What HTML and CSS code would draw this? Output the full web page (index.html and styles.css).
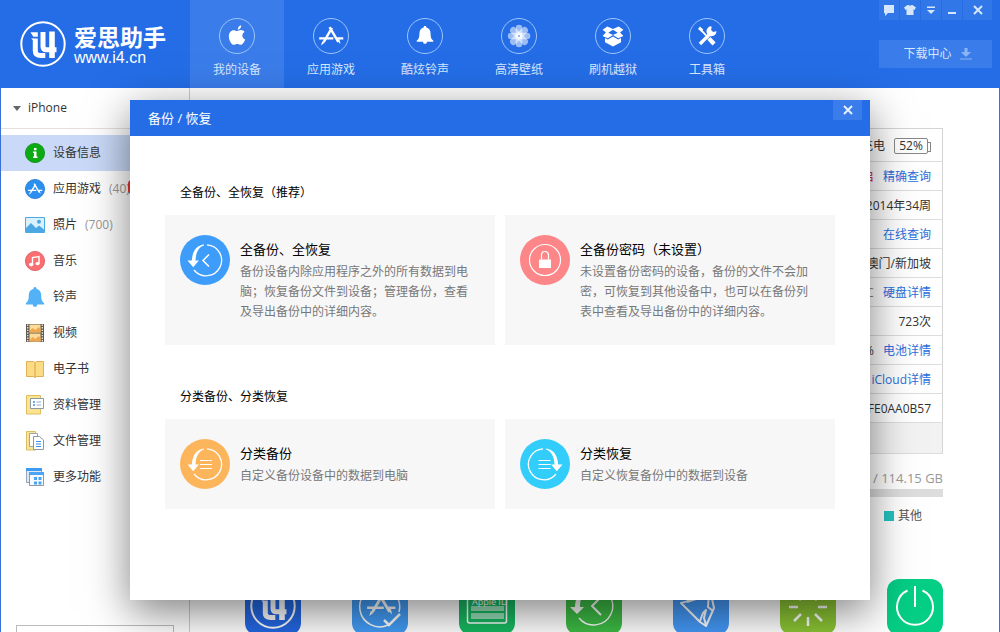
FILE: index.html
```html
<!DOCTYPE html>
<html lang="zh-CN">
<head>
<meta charset="utf-8">
<title>爱思助手</title>
<link rel="stylesheet" href="styles.css">
</head>
<body>
<svg class="defs" aria-hidden="true">
  <symbol id="mark" viewBox="0 0 46 46">
    <circle cx="23" cy="23" r="21.7" fill="none" stroke="currentColor" stroke-width="2"/>
    <g fill="none" stroke="currentColor" stroke-width="5"><path d="M15.300 17.500v12.500q0 4.500 5.500 4.500h4.500"/><path d="M23 11v14.500q0 3.300 3.500 3.300h10"/><path d="M32 10.500v26.500" stroke-width="5.600"/></g>
    <path d="M10.500 11.200h7.300v4.600h-4.500zM11 17.500h3v2.500z" fill="currentColor"/>
  </symbol>
  <symbol id="store" viewBox="0 0 36 36">
    <g fill="none" stroke="currentColor" stroke-width="2.600"><path d="M16.500 8.500l9.200 15.700M19 9.500l-8.600 14.700"/><path d="M5.500 20.500h15M24.500 20.500h6.500" stroke-width="2.200"/></g>
    <path d="M24 22.500l2.800-1.600 1.200 5.600zM8.800 23.500l2.600 1.500-4 3z" fill="currentColor"/>
  </symbol>
  <symbol id="bell" viewBox="0 0 20 20">
    <path d="M10 0c1.200 0 1.600.8 1.500 1.700 3 .8 4.700 3.300 4.700 6.300 0 4.500.8 6.600 3 8.200v1.200h-7c0 1.500-.8 2.400-2.200 2.400s-2.200-.9-2.200-2.400h-7v-1.200c2.200-1.600 3-3.700 3-8.200 0-3 1.700-5.500 4.700-6.300C8.400.8 8.800 0 10 0z" fill="currentColor"/>
  </symbol>
  <symbol id="restore" viewBox="0 0 40 40">
    <path d="M22 4.800A15.500 15.500 0 1 1 9 30" fill="none" stroke="currentColor" stroke-width="1.300"/>
    <path d="M19 4.500C13 5 7.500 9.500 6.800 20.500H2.500l5.700 6.800 5.700-6.800H10.500C10.800 12 14 7 19 5.500z" fill="currentColor"/>
  </symbol>
  <symbol id="close" viewBox="0 0 10 10"><path d="M1 1l8 8M9 1L1 9" stroke="currentColor" stroke-width="2" fill="none"/></symbol>
</svg>

<header class="topbar">
  <a class="brand" href="#home">
    <svg class="brand-mark"><use href="#mark"/></svg>
    <span class="brand-text"><strong>爱思助手</strong><span>www.i4.cn</span></span>
  </a>
  <nav class="nav">
    <a class="nav-item active" href="#device">
      <span class="ring"><svg viewBox="0 0 36 36"><path d="M18.800 11.500c0-2.700 1.600-4.400 3.600-4.800.3 2.500-1.400 4.700-3.600 4.800zM18 12.700c1.200 0 2.400-1 4.200-1 1.600 0 3 .8 3.800 2-3.500 2-2.900 6.700.7 8-.9 2.600-2.800 5.600-4.700 5.600-1.400 0-2-.8-3.700-.8s-2.300.8-3.700.8c-2.600 0-5.200-4.900-5.200-8.900 0-4.200 2.500-6.500 5-6.500 1.600 0 2.600.8 3.600.8z" fill="currentColor"/></svg></span>我的设备</a>
    <a class="nav-item" href="#apps">
      <span class="ring"><svg><use href="#store"/></svg></span>应用游戏</a>
    <a class="nav-item" href="#rings">
      <span class="ring"><svg viewBox="0 0 36 36"><use href="#bell" x="8.500" y="7" width="19" height="20"/></svg></span>酷炫铃声</a>
    <a class="nav-item" href="#wall">
      <span class="ring"><svg viewBox="0 0 36 36"><g fill="currentColor" fill-opacity=".55"><rect id="petal" x="14.500" y="6" width="7" height="13" rx="3.500"/><use href="#petal" transform="rotate(45 18 18)"/><use href="#petal" transform="rotate(90 18 18)"/><use href="#petal" transform="rotate(135 18 18)"/><use href="#petal" transform="rotate(180 18 18)"/><use href="#petal" transform="rotate(225 18 18)"/><use href="#petal" transform="rotate(270 18 18)"/><use href="#petal" transform="rotate(315 18 18)"/></g><circle cx="18" cy="18" r="1" fill="#6b9df0"/></svg></span>高清壁纸</a>
    <a class="nav-item" href="#flash">
      <span class="ring"><svg viewBox="0 0 36 36"><path d="M12 8l6 2.500L24 8l5 3.500-3.500 2.800L29 18l-5.500 2.500L18 17l-5.500 3.500L7 18l3.500-3.700L7 11.500zM18 11.500l-5 3 5 2.500 5-2.500zM9.500 20l3 1.600 5.500-3.100 5.500 3.100 3-1.600v4.500L18 29l-8.500-4.500z" fill="currentColor" fill-rule="evenodd"/></svg></span>刷机越狱</a>
    <a class="nav-item" href="#tools">
      <span class="ring"><svg viewBox="0 0 36 36"><g fill="none" stroke="currentColor"><path d="M10 10l9.500 10" stroke-width="2"/><path d="M20 20.500l5.500 6" stroke-width="4.500"/><path d="M10.500 26.500L22 15" stroke-width="3.600"/></g><path d="M8.500 10.500l2-2.500 3.500 3-2 2.500zM28 13a5.300 5.300 0 1 1-6-5.200l1 .8-.7 3 2.200 2.200 3-.8z" fill="currentColor"/></svg></span>工具箱</a>
  </nav>
  <div class="tools">
    <div class="window-buttons">
      <button type="button" aria-label="反馈"><svg viewBox="0 0 12 12"><path d="M1 1h10v8H5l-3 3V9H1z" fill="currentColor"/></svg></button>
      <button type="button" aria-label="皮肤"><svg viewBox="0 0 12 12"><path d="M3.500 1h1.200q1.300 1.500 2.600 0h1.200L12 3.500 10.500 6 9.500 5.500V11h-7V5.500L1.500 6 0 3.500z" fill="currentColor"/></svg></button>
      <button type="button" aria-label="菜单"><svg viewBox="0 0 12 12"><path d="M2 2.500h8v1.500H2zM2 6h8L6 10z" fill="currentColor"/></svg></button>
      <button type="button" aria-label="最小化"><svg viewBox="0 0 12 12"><path d="M2 8h8v2H2z" fill="currentColor"/></svg></button>
      <button type="button" aria-label="关闭窗口" class="wide"><svg><use href="#close"/></svg></button>
    </div>
    <button type="button" class="download">下载中心
      <svg viewBox="0 0 12 12"><path d="M4.500 0h3v4H11L6 9 1 4h3.500zM0 10.500h12v1H0z" fill="currentColor"/></svg></button>
  </div>
</header>

<div class="body">
  <aside class="sidebar">
    <div class="device"><svg viewBox="0 0 8 5"><path d="M0 0h8L4 5z" fill="#666"/></svg>iPhone</div>
    <ul class="menu">
      <li><a class="current" href="#info"><svg viewBox="0 0 20 20"><circle cx="10" cy="10" r="9.600" fill="#0cab13" stroke="#078c0c" stroke-width=".8"/><path d="M9 5h2.500v2.200H9zM8 8.500h3.500v5h1V15H8v-1.500h1V10H8z" fill="#fff"/></svg>设备信息</a></li>
      <li><a href="#games"><svg viewBox="0 0 20 20" color="#fff"><circle cx="10" cy="10" r="9.600" fill="#2b8ff0" stroke="#2277cf" stroke-width=".8"/><use href="#store" width="20" height="20"/></svg>应用游戏 <span class="count">(40)<i class="dot"></i></span></a></li>
      <li><a href="#photos"><svg viewBox="0 0 20 20"><path d="M.5 2.500h19v15H.5z" fill="#d9f0fd" stroke="#4da9e4"/><path d="M1 13l5-5 5 5 3-2.500 5 4V17H1z" fill="#4ba8e5"/><circle cx="14" cy="6.700" r="2" fill="#4ba8e5"/></svg>照片 <span class="count">(700)</span></a></li>
      <li><a href="#music"><svg viewBox="0 0 20 20"><circle cx="10" cy="10" r="9.600" fill="#fb6f72" stroke="#d95357" stroke-width=".8"/><path d="M7.500 13.500V6.500l6.500-1v7" fill="none" stroke="#fff" stroke-width="1.400"/><ellipse cx="6.200" cy="13.600" rx="2.200" ry="1.800" fill="#fff"/><ellipse cx="12.600" cy="12.600" rx="2.100" ry="1.700" fill="#fff"/></svg>音乐</a></li>
      <li><a href="#tones"><svg color="#53b1f6"><use href="#bell"/></svg>铃声</a></li>
      <li><a href="#video"><svg viewBox="0 0 20 20"><path d="M1 1h18v18H1z" fill="#5f5a52"/><path d="M4.500 1.500h11v8h-11zM4.500 10.500h11v8h-11z" fill="#fbdc9a"/><path d="M4.500 8l3-3 3 2 3-3 2 2v3.500h-11zM4.500 17l3-3 3 2 3-3 2 2v3.500h-11z" fill="#f0a850"/><path d="M2.700 1.500v18M17.300 1.500v18" stroke="#e8e2d4" stroke-width="1.400" stroke-dasharray="1.400 1.200"/></svg>视频</a></li>
      <li><a href="#books"><svg viewBox="0 0 20 20"><path d="M1.500 2.500h7L10 3.500l1.500-1h7v15h-7L10 18.500l-1.500-1h-7z" fill="#fbdc85" stroke="#dfb055"/><path d="M10 3.500v15" stroke="#d9a047"/></svg>电子书</a></li>
      <li><a href="#data"><svg viewBox="0 0 20 20"><path d="M1.500.5h14V19h-14z" fill="#fbe38f" stroke="#dcbf62"/><path d="M5.500 3.500h13v10h-13z" fill="#fff" stroke="#8b98a8"/><path d="M8 7h2M8 10h2" stroke="#3c8ee0" stroke-width="1.500"/><path d="M11.500 7h4.500M11.500 10h4.500" stroke="#8eabc8"/></svg>资料管理</a></li>
      <li><a href="#files"><svg viewBox="0 0 20 20"><path d="M1.500.5h9V19h-9z" fill="#fbe38f" stroke="#dcbf62"/><path d="M4.500 2.500h8v13h-8z" fill="#fff" stroke="#9aa5b2"/><path d="M8.500 5.500h6l4 3.500v9.500h-10z" fill="#fff" stroke="#8b98a8"/><path d="M11 10.500h5M11 13h5M11 15.500h5" stroke="#3c8ee0"/></svg>文件管理</a></li>
      <li><a href="#more"><svg viewBox="0 0 20 20"><path d="M1.500 1.500h15v14h-15z" fill="#dfe8f2" stroke="#94a7bb"/><path d="M1 1h16v3H1z" fill="#3c9af0"/><path d="M4.500 5.500h14v13h-14z" fill="#f7fbff" stroke="#8b98a8"/><path d="M4 5h15v3H4z" fill="#4ba3f3"/><path d="M9 10h3v3H9zM13.500 10h3v3h-3zM9 14.500h3v3H9zM13.500 14.500h3v3h-3z" fill="#4ba3f3"/></svg>更多功能</a></li>
    </ul>
    <div class="side-box"></div>
  </aside>

  <main class="main">
    <table class="info">
      <tr class="power"><td>正在充电 <span class="battery">52%</span></td></tr>
      <tr><td><span class="warn">未开启</span> <a href="#q1">精确查询</a></td></tr>
      <tr><td>2014年34周</td></tr>
      <tr><td><a href="#q2">在线查询</a></td></tr>
      <tr><td>澳门/新加坡</td></tr>
      <tr><td><span class="soft">TLC</span> <a href="#q3">硬盘详情</a></td></tr>
      <tr><td>723次</td></tr>
      <tr><td>% <a href="#q4">电池详情</a></td></tr>
      <tr><td><a href="#q5">iCloud详情</a></td></tr>
      <tr><td>FE0AA0B57</td></tr>
      <tr class="foot"><td></td></tr>
    </table>
    <div class="storage">
      <div class="storage-text">/ 114.15 GB</div>
      <div class="storage-bar"></div>
      <div class="legend"><i></i>其他</div>
    </div>
    <div class="tiles">
      <button type="button" class="tile navy" aria-label="爱思"><svg viewBox="0 0 56 56"><use href="#mark" x="5" y="4" width="46" height="46"/></svg></button>
      <button type="button" class="tile blue" aria-label="应用修复"><svg viewBox="0 0 56 56"><path d="M36 46A20 20 0 1 1 47 33" fill="none" stroke="currentColor" stroke-width="1.500"/><use href="#store" x="9" y="6" width="40" height="40"/><path d="M32 41l5 5 11-11" fill="none" stroke="currentColor" stroke-width="2.500"/></svg></button>
      <button type="button" class="tile green" aria-label="Apple ID"><svg viewBox="0 0 56 56"><rect x="8.500" y="10" width="39" height="34" rx="2" fill="none" stroke="currentColor" stroke-width="1.500"/><path d="M12 27h33v5H12zM12 34h33v6H12z" fill="currentColor" opacity=".55"/><text x="13" y="26" class="tile-label">Apple ID</text></svg></button>
      <button type="button" class="tile leaf" aria-label="备份恢复"><svg viewBox="0 0 56 56"><path d="M28 8a19 19 0 1 1-15 31" fill="none" stroke="currentColor" stroke-width="1.400"/><path d="M24 8C14 11 9 18 9 28H4l7 7 7-7h-4c0-9 3-15 10-20z" fill="currentColor"/><path d="M35 18l-9 9 9 9" fill="none" stroke="currentColor" stroke-width="2"/></svg></button>
      <button type="button" class="tile azure" aria-label="清理垃圾"><svg viewBox="0 0 56 56"><path d="M8 24q12-2 18-12l12 3 3 14-8 18-6-4zM36 14l-1 14 5 4M27 42l3-8 3-3-2 8 2 7M14 23l12-4" fill="none" stroke="currentColor" stroke-width="2" stroke-linejoin="round"/></svg></button>
      <button type="button" class="tile lime" aria-label="加载"><svg viewBox="0 0 56 56"><path d="M9 28h9M38 28h9M28 38v9M21 35l-7 7M35 35l7 7M28 18V9M21 21l-7-7M35 21l7-7" fill="none" stroke="currentColor" stroke-width="2.500"/></svg></button>
      <button type="button" class="tile mint" aria-label="关机"><svg viewBox="0 0 56 56"><path d="M20.500 11.500a18 18 0 1 0 15 0M28 7v21" fill="none" stroke="currentColor" stroke-width="2"/></svg></button>
    </div>
  </main>
</div>

<section class="dialog" role="dialog" aria-labelledby="dialog-title">
  <header class="dialog-head">
    <h1 id="dialog-title">备份 / 恢复</h1>
    <button type="button" class="dialog-close" aria-label="关闭"><svg><use href="#close"/></svg></button>
  </header>
  <div class="dialog-body">
    <h2>全备份、全恢复（推荐）</h2>
    <div class="cards">
      <a class="card" href="#full">
        <span class="badge b-blue"><svg viewBox="0 0 50 50"><use href="#restore" x="5" y="5" width="40" height="40"/><path d="M29 19.500l-6 6 6 6" fill="none" stroke="currentColor" stroke-width="1.500"/></svg></span>
        <span class="card-text"><strong>全备份、全恢复</strong><span>备份设备内除应用程序之外的所有数据到电脑；恢复备份文件到设备；管理备份，查看及导出备份中的详细内容。</span></span>
      </a>
      <a class="card" href="#password">
        <span class="badge b-red"><svg viewBox="0 0 50 50"><circle cx="25" cy="25" r="15.500" fill="none" stroke="currentColor" stroke-width="1.200"/><path d="M19 24.500h12V33H19z" fill="currentColor"/><path d="M21.500 24.500V20a3.500 3.500 0 0 1 7 0v4.500" fill="none" stroke="currentColor" stroke-width="1.200"/></svg></span>
        <span class="card-text"><strong>全备份密码（未设置）</strong><span>未设置备份密码的设备，备份的文件不会加密，可恢复到其他设备中，也可以在备份列表中查看及导出备份中的详细内容。</span></span>
      </a>
    </div>
    <h2>分类备份、分类恢复</h2>
    <div class="cards">
      <a class="card" href="#part-backup">
        <span class="badge b-orange"><svg viewBox="0 0 50 50"><use href="#restore" x="5" y="5" width="40" height="40"/><path d="M20 21.500h12M20 25.500h12M20 29.500h12" stroke="currentColor" stroke-width="1.200"/></svg></span>
        <span class="card-text"><strong>分类备份</strong><span>自定义备份设备中的数据到电脑</span></span>
      </a>
      <a class="card" href="#part-restore">
        <span class="badge b-cyan"><svg viewBox="0 0 50 50"><g transform="matrix(-1 0 0 1 50 0)"><use href="#restore" x="5" y="5" width="40" height="40"/></g><path d="M18.500 21.500h12M18.500 25.500h12M18.500 29.500h12" stroke="currentColor" stroke-width="1.200"/></svg></span>
        <span class="card-text"><strong>分类恢复</strong><span>自定义恢复备份中的数据到设备</span></span>
      </a>
    </div>
  </div>
</section>
</body>
</html>
```
FILE: styles.css
```css
* { box-sizing: border-box; }

body {
  margin: 0;
  height: 100vh;
  display: flex;
  flex-direction: column;
  position: relative;
  overflow: hidden;
  background: #fff;
  color: #333;
  font: 12px/20px "Open Sans", "Noto Sans CJK SC", sans-serif;
}

a { color: inherit; text-decoration: none; }
button { border: 0; padding: 0; margin: 0; font: inherit; color: inherit; background: none; cursor: pointer; }
h1, h2 { margin: 0; font-weight: 400; }
ul { list-style: none; margin: 0; padding: 0; }
svg { display: block; }
.defs { position: absolute; width: 0; height: 0; }

/* Top bar */
.topbar {
  display: flex;
  flex: none;
  height: 88px;
  background: #246de6;
  color: #fff;
}
.brand { display: flex; flex: none; align-items: center; gap: 8px; width: 190px; padding-left: 20px; }
.brand-mark { width: 46px; height: 46px; }
.brand-text { display: flex; flex-direction: column; font: 16px/16px "Liberation Sans", sans-serif; }
.brand-text strong { font: 700 23px/28px "Noto Sans CJK SC", sans-serif; }
.nav { display: flex; flex: 1; }
.nav-item {
  display: flex;
  flex-direction: column;
  align-items: center;
  gap: 6px;
  width: 94px;
  padding-top: 18px;
  color: #d6e6fc;
}
.nav-item.active { background: #3a7ce9; }
.ring { display: block; width: 36px; height: 36px; border: 1px solid #9cc6f8; border-radius: 50%; color: #fff; }
.ring svg { width: 34px; height: 34px; }
.tools { display: flex; flex-direction: column; gap: 20px; flex: none; width: 113px; margin-right: 8px; color: #d6e6fc; }
.window-buttons { display: flex; gap: 1px; height: 20px; }
.window-buttons button { display: grid; place-items: center; flex: 1; background: #3277e8; }
.window-buttons button.wide { flex: none; width: 29px; }
.window-buttons svg { width: 12px; height: 12px; }
.window-buttons .wide svg { width: 10px; height: 10px; }
.download { display: flex; align-items: center; justify-content: center; gap: 8px; height: 28px; padding-left: 4px; background: #3a7ce9; }
.download svg { width: 12px; height: 12px; color: #8ab4f3; }

/* Columns under the bar */
.body { display: flex; flex: 1; min-height: 0; border: solid #3a6fd4; border-width: 0 1px; overflow: hidden; }
.sidebar { flex: none; width: 189px; border-right: 1px solid #ccc; overflow: hidden; }
.device { display: flex; align-items: center; gap: 7px; height: 41px; padding-left: 12px; border-bottom: 1px solid #e6dede; }
.device svg { width: 8px; height: 5px; }
.menu { padding-top: 6px; }
.menu a { display: flex; align-items: center; gap: 8px; height: 36px; padding-left: 24px; }
.menu a.current { background: #c9d9f7; }
.menu svg { flex: none; width: 20px; height: 20px; }
.count { position: relative; color: #999; }
.dot { position: absolute; left: 19px; top: 1px; width: 14px; height: 14px; border-radius: 4px; background: #e33; }
.side-box { height: 60px; margin: 130px 15px 0; border: 1px solid #bbb; }

.main { flex: 1; min-width: 0; padding: 40px 56px 0 55px; }
.info {
  width: 50%;
  margin-left: auto;
  border: 1px solid #d4d4d4;
  border-collapse: collapse;
  text-align: right;
}
.info td { height: 29px; padding: 1px 11px 0 0; border-bottom: 1px solid #ddd; }
.info a { margin-left: 6px; color: #2a6fdc; }
.info .power td { height: 33px; }
.info .foot td { height: 31px; background: #f2f2f2; }
.warn { color: #d0103c; }
.soft { color: #888; }
.battery {
  display: inline-block;
  position: relative;
  width: 34px;
  margin: 0 3px 0 6px;
  border: 1px solid #888;
  border-radius: 2px;
  line-height: 14px;
  text-align: center;
}
.battery::after { content: ""; position: absolute; right: -4px; top: 3px; width: 3px; height: 8px; border: 1px solid #888; border-left: 0; }
.storage { padding-top: 14px; text-align: right; color: #999; }
.storage-text { font-size: 13px; }
.storage-bar { height: 8px; margin-top: 1px; background: #ddd; }
.legend { display: flex; align-items: center; justify-content: flex-end; gap: 4px; padding: 9px 21px 0 0; color: #555; }
.legend i { width: 10px; height: 10px; background: #24c3c0; }
.tiles { display: flex; justify-content: space-between; margin-top: 53px; }
.tile { width: 56px; height: 56px; border-radius: 12px; color: #fff; }
.tile svg { width: 56px; height: 56px; }
.tile-label { font: 9px "Open Sans", sans-serif; fill: #fff; }
.navy { background: #2467e2; }
.blue { background: #429bf5; }
.green { background: #17b861; }
.leaf { background: #3dbb45; }
.azure { background: #4498f6; }
.lime { background: #8bc434; }
.mint { background: #05ce85; }

/* Backup dialog */
.dialog {
  position: absolute;
  top: 100px;
  left: 130px;
  right: 130px;
  background: #fff;
  color: #000;
  box-shadow: 0 12px 40px rgba(0, 0, 0, .5);
}
.dialog-head { display: flex; justify-content: space-between; align-items: flex-start; height: 36px; padding: 0 8px 0 18px; background: #246de6; color: #fff; }
.dialog-head h1 { font-size: 13px; line-height: 36px; }
.dialog-close { display: grid; place-items: center; width: 29px; height: 20px; background: #3a7ce9; color: #e6f0ff; }
.dialog-close svg { width: 10px; height: 10px; }
.dialog-body { padding: 47px 35px 91px; }
.dialog-body h2 { margin-bottom: 12px; padding-left: 15px; font-size: 12px; line-height: 20px; }
.cards { display: grid; grid-template-columns: 1fr 1fr; gap: 10px; }
.cards + h2 { margin-top: 42px; }
.card { display: flex; gap: 10px; padding: 20px 25px 20px 15px; background: #f7f7f7; }
.badge { flex: none; width: 50px; height: 50px; border-radius: 50%; color: #fff; }
.badge svg { width: 50px; height: 50px; }
.b-blue { background: #3e9dfb; }
.b-red { background: #fd8688; }
.b-orange { background: #fdb55c; }
.b-cyan { background: #33cdfb; }
.card-text { display: flex; flex-direction: column; gap: 3px; padding: 4px 0 3px; color: #777; }
.card-text strong { font-size: 13px; font-weight: 400; color: #000; }
```
